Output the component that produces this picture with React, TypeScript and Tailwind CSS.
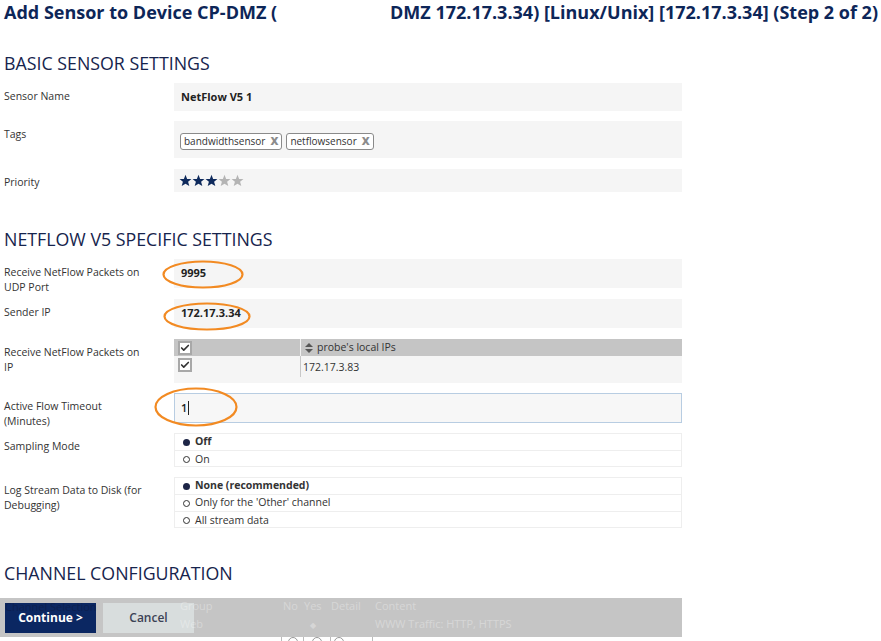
import React from 'react';
import { Check } from 'lucide-react';

const Label: React.FC<{ children: React.ReactNode }> = ({ children }) => (
  <div className="w-[174px] shrink-0 pl-[4px] pr-[25px] pt-[6px] text-[10.5px] leading-[15px] text-[#333]">{children}</div>
);

const Star: React.FC<{ filled: boolean }> = ({ filled }) => (
  <svg width="13" height="13" viewBox="0 0 24 24">
    <polygon
      points="12,1.5 15,9 23,9.3 16.8,14.3 19,22.3 12,17.8 5,22.3 7.2,14.3 1,9.3 9,9"
      fill={filled ? '#0e2a5c' : '#b4b4b4'}
    />
  </svg>
);

const Tag: React.FC<{ text: string }> = ({ text }) => (
  <span className="flex h-[17px] items-center gap-[5px] rounded-[3px] border border-[#8a8a8a] bg-white px-[3px] text-[10px] text-[#333]">
    {text}
    <span className="text-[11px] font-extrabold text-[#8c8c8c]">X</span>
  </span>
);

const CheckBox = () => (
  <span className="flex h-[14px] w-[14px] items-center justify-center border-2 border-[#a8a8a8] bg-white">
    <Check className="h-[10px] w-[10px] text-[#333]" strokeWidth={4} />
  </span>
);

const Radio: React.FC<{ on?: boolean; text: string }> = ({ on, text }) => (
  <div className="flex h-[17px] items-center border-b border-[#eeeeee] pl-[8px] text-[10.5px] text-[#333] last:border-b-0">
    {on ? (
      <span className="mr-[5px] h-[7px] w-[7px] rounded-full bg-[#1d2546]" />
    ) : (
      <span className="mr-[5px] h-[7px] w-[7px] rounded-full border border-[#333]" />
    )}
    <span className={on ? 'font-bold' : ''}>{text}</span>
  </div>
);

const Heading: React.FC<{ children: React.ReactNode; className?: string }> = ({ children, className }) => (
  <h2 className={`h-[24px] pl-[4px] text-[17.8px] leading-[24px] text-[#16244d] ${className ?? ''}`}>{children}</h2>
);

const Ring: React.FC<{ x: number; y: number; w: number; h: number }> = ({ x, y, w, h }) => (
  <svg className="pointer-events-none absolute z-20" style={{ left: x, top: y }} width={w} height={h}>
    <ellipse cx={w / 2} cy={h / 2} rx={w / 2 - 1.5} ry={h / 2 - 1.5} fill="none" stroke="#f28a22" strokeWidth="2.2" />
  </svg>
);

const Circle = () => <span className="mt-[3px] h-[10px] w-[10px] rounded-full border border-[#999]" />;

export default function App() {
  return (
    <div className="relative h-[641px] w-[881px] overflow-hidden bg-white font-['Open_Sans',sans-serif]">
      <h1 className="flex h-[24px] text-[18px] font-bold leading-[24px] text-[#0d2658]">
        <span className="w-[390px] shrink-0 pl-[4px]">Add Sensor to Device CP-DMZ (</span>
        <span className="whitespace-nowrap">DMZ 172.17.3.34) [Linux/Unix] [172.17.3.34] (Step 2 of 2)</span>
      </h1>

      <Heading className="mt-[27px]">BASIC SENSOR SETTINGS</Heading>

      <div className="mt-[8px] flex h-[28px]">
        <Label>Sensor Name</Label>
        <div className="flex w-[508px] items-center bg-[#f5f5f5] pl-[7px] text-[11px] font-bold text-[#222]">NetFlow V5 1</div>
      </div>

      <div className="mt-[10px] flex h-[37px]">
        <Label>Tags</Label>
        <div className="flex w-[508px] items-center gap-[4px] bg-[#f5f5f5] pl-[6px] pt-[3px]">
          <Tag text="bandwidthsensor" />
          <Tag text="netflowsensor" />
        </div>
      </div>

      <div className="mt-[11px] flex h-[23px]">
        <Label>Priority</Label>
        <div className="flex w-[508px] items-center bg-[#f5f5f5] pl-[5px]">
          <Star filled />
          <Star filled />
          <Star filled />
          <Star filled={false} />
          <Star filled={false} />
        </div>
      </div>

      <Heading className="mt-[35px]">NETFLOW V5 SPECIFIC SETTINGS</Heading>

      <div className="mt-[8px] flex h-[29px]">
        <Label>Receive NetFlow Packets on UDP Port</Label>
        <div className="flex w-[508px] items-center bg-[#f5f5f5] pl-[7px] text-[11px] font-bold text-[#222]">9995</div>
      </div>

      <div className="mt-[11px] flex h-[29px]">
        <Label>Sender IP</Label>
        <div className="flex w-[508px] items-center bg-[#f5f5f5] pl-[7px] text-[11px] font-bold text-[#222]">172.17.3.34</div>
      </div>

      <div className="mt-[11px] flex h-[44px]">
        <Label>Receive NetFlow Packets on IP</Label>
        <div className="w-[508px]">
          <div className="flex h-[17px] bg-[#c5c5c5]">
            <div className="flex w-[126px] items-center pl-[4px]">
              <CheckBox />
            </div>
            <div className="flex items-center gap-[4px] border-l border-[#f0f0f0] pl-[4px] text-[10.5px] text-[#333]">
              <svg width="8" height="10" viewBox="0 0 8 10">
                <polygon points="4,0 8,4 0,4" fill="#555" />
                <polygon points="0,6 8,6 4,10" fill="#555" />
              </svg>
              probe's local IPs
            </div>
          </div>
          <div className="flex h-[27px] bg-[#f5f5f5]">
            <div className="w-[126px] pl-[4px] pt-[2px]">
              <CheckBox />
            </div>
            <div className="mb-[6px] border-l border-[#c8c8c8] pl-[2px] pt-[4px] text-[10.5px] leading-[15px] text-[#333]">172.17.3.83</div>
          </div>
        </div>
      </div>

      <div className="mt-[10px] flex h-[30px]">
        <Label>Active Flow Timeout (Minutes)</Label>
        <div className="flex w-[508px] items-center border border-[#b8cde2] bg-[#f7f7f7] pl-[6px] text-[11px] font-semibold text-[#222]">
          1<span className="ml-[1px] h-[14px] w-px bg-[#222]" />
        </div>
      </div>

      <div className="mt-[10px] flex h-[34px]">
        <Label>Sampling Mode</Label>
        <div className="w-[508px] border border-[#eeeeee]">
          <Radio on text="Off" />
          <Radio text="On" />
        </div>
      </div>

      <div className="mt-[10px] flex h-[51px]">
        <Label>Log Stream Data to Disk (for Debugging)</Label>
        <div className="w-[508px] border border-[#eeeeee]">
          <Radio on text="None (recommended)" />
          <Radio text="Only for the 'Other' channel" />
          <Radio text="All stream data" />
        </div>
      </div>

      <Heading className="mt-[33px]">CHANNEL CONFIGURATION</Heading>

      <div className="mt-[13px] flex text-[11px]">
        <div className="pointer-events-none relative z-10 w-[174px] shrink-0 pl-[5px] pt-[1px] leading-[15px] text-[#0d1a40] opacity-50">
          Channel Selection
        </div>
        <div className="w-[508px]">
          <div className="pointer-events-none relative z-10 text-white opacity-30">
            <div className="flex h-[17px] items-center">
              <span className="w-[107px] pl-[6px]">Group</span>
              <span className="w-[22px] pl-[2px]">No</span>
              <span className="w-[27px] pl-[1px]">Yes</span>
              <span className="w-[42px] pl-[1px]">Detail</span>
              <span className="pl-[3px]">Content</span>
            </div>
            <div className="flex h-[19px] items-center">
              <span className="w-[107px] pl-[6px]">Web</span>
              <span className="w-[22px]" />
              <span className="w-[27px] pl-[7px] text-[8px]">◆</span>
              <span className="w-[42px]" />
              <span className="pl-[3px]">WWW Traffic: HTTP, HTTPS</span>
            </div>
          </div>
          <div className="flex h-[10px] items-start">
            <span className="w-[107px]" />
            <span className="flex w-[22px] justify-center border-l border-[#bbb]"><Circle /></span>
            <span className="flex w-[27px] justify-center border-l border-[#bbb]"><Circle /></span>
            <span className="flex w-[42px] border-l border-[#bbb] pl-[3px]"><Circle /></span>
            <span className="h-full border-l border-[#bbb]" />
          </div>
        </div>
      </div>

      <div className="absolute left-0 top-[598px] flex h-[39px] w-[682px] gap-[7px] bg-[#c5c5c5] pl-[5px] pt-[5px]">
        <button className="h-[30px] w-[91px] bg-[#0b2762] text-[12px] font-bold text-white">Continue &gt;</button>
        <button className="h-[30px] w-[91px] bg-[#d8dddd] text-[12px] font-semibold text-[#3c4255]">Cancel</button>
      </div>

      <Ring x={162} y={260} w={82} h={29} />
      <Ring x={163} y={302} w={88} h={29} />
      <Ring x={154} y={387} w={84} h={40} />
    </div>
  );
}
